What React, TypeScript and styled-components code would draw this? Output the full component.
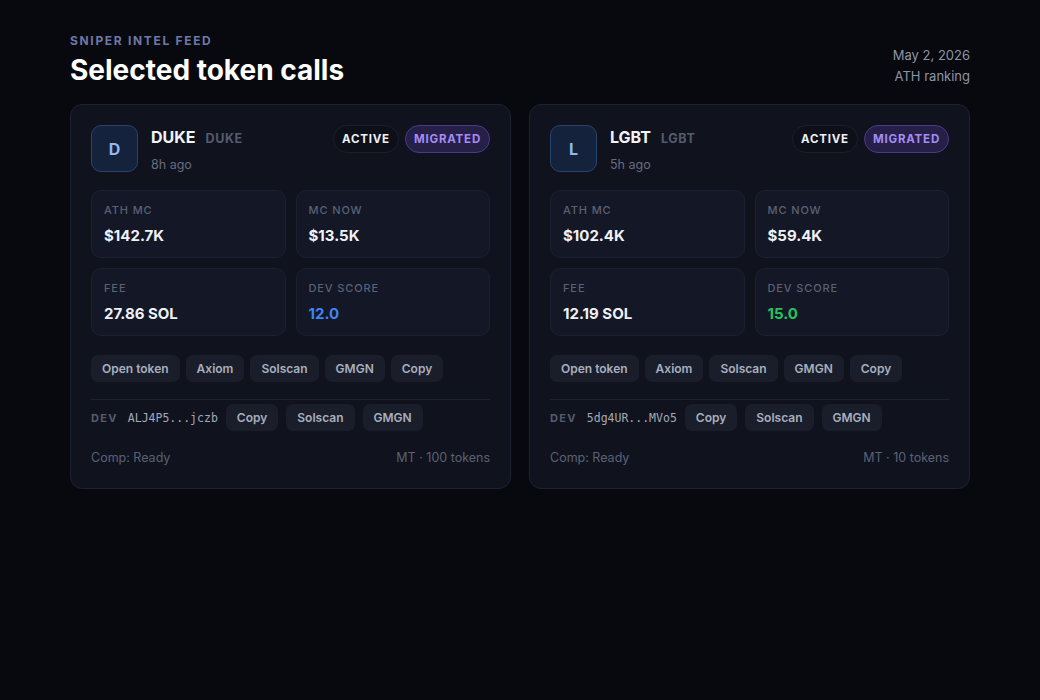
import React from "react";
import styled, { createGlobalStyle } from "styled-components";

const Global = createGlobalStyle`
  html, body { margin: 0; padding: 0; background: #08090e; }
  body { font-family: Inter, "Noto Sans", sans-serif; color: #eef1f7; -webkit-font-smoothing: antialiased; }
  * { box-sizing: border-box; }
`;

const Page = styled.div`
  width: 900px;
  margin: 0 auto;
  padding-top: 33px;
`;

const Header = styled.header`
  display: flex;
  justify-content: space-between;
  align-items: flex-end;
  margin-bottom: 17px;
`;

const Eyebrow = styled.div`
  font-size: 12px;
  line-height: 16px;
  font-weight: 700;
  letter-spacing: 0.14em;
  color: #6d78a6;
  text-transform: uppercase;
`;

const Title = styled.h1`
  margin: 4px 0 0;
  font-size: 28px;
  line-height: 34px;
  font-weight: 700;
  color: #ffffff;
`;

const Meta = styled.div`
  text-align: right;
  font-size: 13px;
  line-height: 21px;
  color: #8e94a6;
`;

const Grid = styled.div`
  display: grid;
  grid-template-columns: 1fr 1fr;
  gap: 18px;
`;

const Card = styled.article`
  background: #10131e;
  border: 1px solid #1d2231;
  border-radius: 12px;
  padding: 20px 20px 21px;
  display: flex;
  flex-direction: column;
`;

const Head = styled.div`
  display: flex;
  align-items: flex-start;
  gap: 13px;
`;

const Avatar = styled.div`
  width: 47px;
  height: 47px;
  border-radius: 10px;
  background: #14223b;
  border: 1px solid #28436c;
  display: flex;
  align-items: center;
  justify-content: center;
  font-size: 16px;
  font-weight: 700;
  color: #8db8f2;
  flex-shrink: 0;
`;

const Ident = styled.div`
  flex: 1;
  padding-top: 1px;
`;

const NameLine = styled.div`
  display: flex;
  align-items: baseline;
  gap: 10px;
`;

const Name = styled.span`
  font-size: 16px;
  line-height: 22px;
  font-weight: 700;
  color: #f1f3f8;
`;

const Symbol = styled.span`
  font-size: 12.5px;
  font-weight: 700;
  letter-spacing: 0.05em;
  color: #545b6e;
`;

const Age = styled.div`
  margin-top: 9px;
  font-size: 12.5px;
  line-height: 16px;
  color: #666c7e;
`;

const Badges = styled.div`
  display: flex;
  gap: 6px;
`;

const Badge = styled.span<{ $tone: "plain" | "purple" }>`
  height: 28px;
  padding: 0 8px;
  border-radius: 14px;
  display: inline-flex;
  align-items: center;
  font-size: 11.5px;
  font-weight: 700;
  letter-spacing: 0.07em;
  background: ${(p) => (p.$tone === "purple" ? "#261f48" : "#0d1019")};
  border: 1px solid ${(p) => (p.$tone === "purple" ? "#4a3a8a" : "#1b1f2c")};
  color: ${(p) => (p.$tone === "purple" ? "#a48cf4" : "#eef1f7")};
`;

const Stats = styled.div`
  margin-top: 17px;
  display: grid;
  grid-template-columns: 1fr 1fr;
  gap: 10px;
`;

const Stat = styled.div`
  height: 68px;
  padding: 12px 12px;
  background: #131726;
  border: 1px solid #1b2030;
  border-radius: 10px;
`;

const StatLabel = styled.div`
  font-size: 11px;
  line-height: 14px;
  font-weight: 500;
  letter-spacing: 0.08em;
  color: #5a6174;
  text-transform: uppercase;
`;

const StatValue = styled.div<{ $color?: string }>`
  margin-top: 9px;
  font-size: 15px;
  line-height: 20px;
  font-weight: 700;
  color: ${(p) => p.$color ?? "#eef1f7"};
`;

const Links = styled.div`
  margin-top: 19px;
  display: flex;
  gap: 6px;
`;

const Btn = styled.button`
  height: 27px;
  padding: 0 11px;
  border: none;
  border-radius: 7px;
  background: #1a1e2b;
  color: #a8aebd;
  font-family: inherit;
  font-size: 12px;
  font-weight: 600;
  cursor: pointer;
`;

const DevRow = styled.div`
  margin-top: 17px;
  padding-top: 4px;
  border-top: 1px solid #1d2231;
  display: flex;
  align-items: center;
  gap: 8px;
`;

const DevLabel = styled.span`
  font-size: 11px;
  font-weight: 700;
  letter-spacing: 0.12em;
  color: #545b6e;
  margin-right: 2px;
`;

const Address = styled.span`
  font-family: "DejaVu Sans Mono", "Liberation Mono", monospace;
  font-size: 11.5px;
  color: #a3a9b8;
`;

const Footer = styled.div`
  margin-top: 18px;
  display: flex;
  justify-content: space-between;
  font-size: 12.5px;
  line-height: 18px;
  color: #5a6174;
`;

type Token = {
  name: string;
  age: string;
  ath: string;
  now: string;
  fee: string;
  score: string;
  scoreColor: string;
  dev: string;
  tokens: number;
};

const tokens: Token[] = [
  { name: "DUKE", age: "8h ago", ath: "$142.7K", now: "$13.5K", fee: "27.86 SOL", score: "12.0", scoreColor: "#3f85f4", dev: "ALJ4P5...jczb", tokens: 100 },
  { name: "LGBT", age: "5h ago", ath: "$102.4K", now: "$59.4K", fee: "12.19 SOL", score: "15.0", scoreColor: "#22c55e", dev: "5dg4UR...MVo5", tokens: 10 },
];

function TokenCard({ t }: { t: Token }) {
  return (
    <Card>
      <Head>
        <Avatar>{t.name[0]}</Avatar>
        <Ident>
          <NameLine>
            <Name>{t.name}</Name>
            <Symbol>{t.name}</Symbol>
          </NameLine>
          <Age>{t.age}</Age>
        </Ident>
        <Badges>
          <Badge $tone="plain">ACTIVE</Badge>
          <Badge $tone="purple">MIGRATED</Badge>
        </Badges>
      </Head>
      <Stats>
        <Stat>
          <StatLabel>ATH MC</StatLabel>
          <StatValue>{t.ath}</StatValue>
        </Stat>
        <Stat>
          <StatLabel>MC now</StatLabel>
          <StatValue>{t.now}</StatValue>
        </Stat>
        <Stat>
          <StatLabel>Fee</StatLabel>
          <StatValue>{t.fee}</StatValue>
        </Stat>
        <Stat>
          <StatLabel>Dev score</StatLabel>
          <StatValue $color={t.scoreColor}>{t.score}</StatValue>
        </Stat>
      </Stats>
      <Links>
        <Btn>Open token</Btn>
        <Btn>Axiom</Btn>
        <Btn>Solscan</Btn>
        <Btn>GMGN</Btn>
        <Btn>Copy</Btn>
      </Links>
      <DevRow>
        <DevLabel>DEV</DevLabel>
        <Address>{t.dev}</Address>
        <Btn>Copy</Btn>
        <Btn>Solscan</Btn>
        <Btn>GMGN</Btn>
      </DevRow>
      <Footer>
        <span>Comp: Ready</span>
        <span>MT · {t.tokens} tokens</span>
      </Footer>
    </Card>
  );
}

export default function App() {
  return (
    <>
      <Global />
      <Page>
        <Header>
          <div>
            <Eyebrow>Sniper intel feed</Eyebrow>
            <Title>Selected token calls</Title>
          </div>
          <Meta>
            <div>May 2, 2026</div>
            <div>ATH ranking</div>
          </Meta>
        </Header>
        <Grid>
          {tokens.map((t) => (
            <TokenCard key={t.name} t={t} />
          ))}
        </Grid>
      </Page>
    </>
  );
}
